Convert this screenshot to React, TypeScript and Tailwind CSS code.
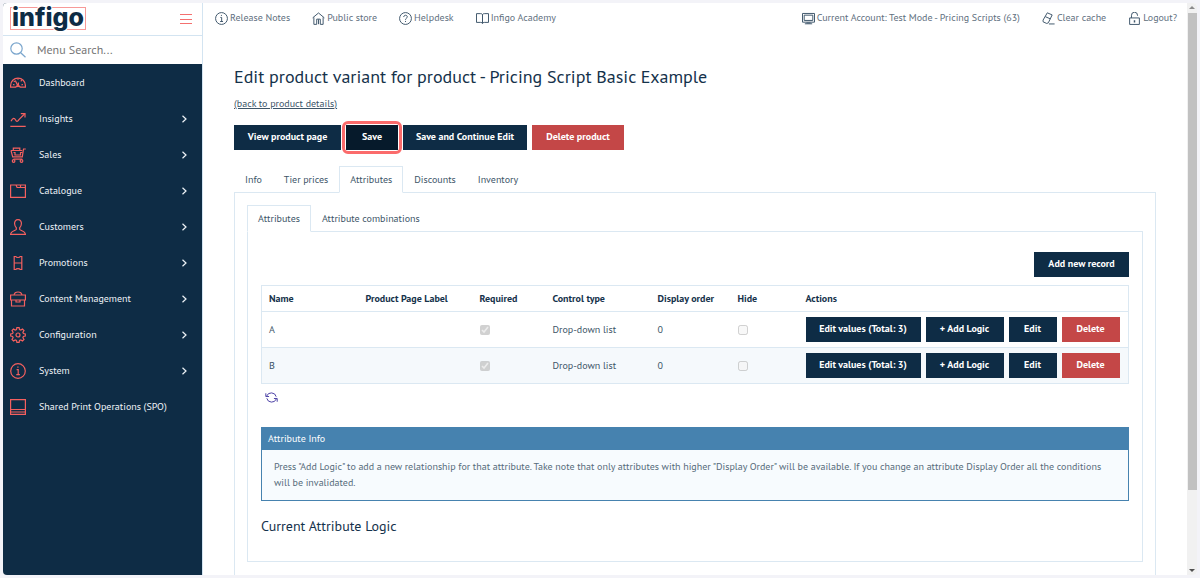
import type { ReactNode } from 'react';
import clsx from 'clsx';

// --- ICONS ---

type IconProps = { children: ReactNode; className?: string };

function Icon({ children, className = 'size-4' }: IconProps) {
  return (
    <svg
      viewBox="0 0 16 16"
      fill="none"
      stroke="currentColor"
      strokeWidth="1.2"
      className={clsx('shrink-0', className)}
      aria-hidden="true"
    >
      {children}
    </svg>
  );
}

const icons = {
  dashboard: (
    <>
      <path d="M.6 12.2V10.500a7.400 7.400 0 0 1 14.800 0v1.700H10.300a2.500 2.500 0 0 0-4.600 0z" />
      <path d="M7.600 10.300 5.300 5.400M8.400 10.300V7.500M3 9.500l1.500.4M13 9.500l-1.500.4M8 3.200v1.600M11.800 5l-1 1.300M3.800 6l1 .8" />
      <path d="M6.600 12.200a1.500 1.500 0 0 1 2.900 0" />
    </>
  ),
  insights: (
    <>
      <path d="M.3 15.300h15.400" />
      <path d="M1 10.300c1.800-4 3.500-3.500 4.600-1.200s2.600 1 3.600-.8L14.500 3" />
      <path d="M10.800 2.600h4.200v4" />
    </>
  ),
  sales: (
    <>
      <path d="M.8 3.500h11.400M1 3.500l1.700 6.300h9.600L13.500 2h2.300M3.400 12.200h8.900M3.300 3.500V1.200h6.500v2.300" />
      <path d="M3.500 5.500h1.500v2.500h5.500V5.500h2" />
      <circle cx="3.600" cy="14" r="1.300" />
      <circle cx="11.500" cy="14" r="1.300" />
    </>
  ),
  catalogue: <path d="M.6 14.300V2h5.400l1.100 2.500h8.300v9.800zM6 2h9.400v2.500M10.500 2v2.500" />,
  customers: (
    <path d="M8 .6c2.300 0 3.600 1.700 3.400 4.200-.1 1.600-.7 3.100-1.700 4v1.600c.4 1.100 5.700 1.500 5.700 5H.6c0-3.500 5.300-3.900 5.700-5V8.800c-1-.9-1.600-2.400-1.700-4C4.400 2.300 5.700.6 8 .6z" />
  ),
  promotions: <path d="M4.200 1.500h1.600c.4 1.300 4 1.300 4.400 0h1.600v13h-1.600c-.4-1.300-4-1.300-4.400 0H4.200zM4.200 8h7.600" />,
  content: (
    <path d="M.6 4h14.800v5H.6zM1.500 9v6h13V9M6 9v2h4V9M4 4c.3-1.700 1.800-3 4-3s3.700 1.300 4 3" />
  ),
  configuration: (
    <>
      <path d="M6.900.7h2.200l.4 1.900 1.300.5 1.700-1.100 1.500 1.500-1.100 1.700.5 1.300 1.900.4v2.200l-1.900.4-.5 1.300 1.100 1.700-1.500 1.500-1.700-1.100-1.300.5-.4 1.900H6.900l-.4-1.900-1.300-.5L3.500 14 2 12.500l1.100-1.700-.5-1.300L.7 9.100V6.900l1.900-.4.5-1.300L2 3.500 3.500 2l1.700 1.100 1.300-.5z" />
      <circle cx="8" cy="8" r="2" />
    </>
  ),
  system: (
    <>
      <circle cx="8" cy="8" r="7.300" />
      <path d="M6.600 6.700H8.200v5M6.300 11.700h3.600M7.300 4.200h1.200" />
    </>
  ),
  spo: <path d="M.6.6h14.800v14.800H.6zM.6 10.500h14.800M.6 13h14.800" />,
  home: <path d="m.8 7.200 7.200-6 7.200 6M2.300 6.500v8.700h3.500V8.800h4.400v6.400h3.500V6.500M8 9v6" />,
  help: (
    <>
      <circle cx="8" cy="8" r="7.300" />
      <path d="M5.800 6.200c0-3 4.400-2.900 4.400-.2 0 1.700-2.200 1.600-2.200 3.600M8 11v1.300" />
    </>
  ),
  book: (
    <path d="M.6 2h5.200c1.300 0 2.200.6 2.200 1.600V14c-.3-.8-1-1.200-2.200-1.200H.6zM15.400 2h-5.200C8.900 2 8 2.600 8 3.600V14c.3-.8 1-1.200 2.200-1.200h5.200z" />
  ),
  monitor: <path d="M.6 1.800h14.800v10.700H.6zM2.700 3.900h10.600v6.500H2.700zM3.500 14.500h9M5.500 13.500h5" />,
  eraser: <path d="m6.500 1 6 2.600-4.700 9.700-2 .8-4.400-2L1.300 10zM4 5.700l6.200 2.700M8.500 14.700h7" />,
  lock: (
    <>
      <path d="M2 7.300h12v8H2zM4.300 7.300V4a3.700 3.700 0 0 1 7.400 0v.8" />
      <path d="M8 10v3" strokeWidth="1.800" />
    </>
  ),
  refresh: <path d="M1 2.800v4h4M15 13.200v-4h-4M2 6.300a6.200 6.200 0 0 1 11.800.7M14 9.700A6.200 6.200 0 0 1 2.200 9" />,
};

// --- DATA ---

const menu = [
  { label: 'Dashboard', icon: icons.dashboard, expandable: false },
  { label: 'Insights', icon: icons.insights, expandable: true },
  { label: 'Sales', icon: icons.sales, expandable: true },
  { label: 'Catalogue', icon: icons.catalogue, expandable: true },
  { label: 'Customers', icon: icons.customers, expandable: true },
  { label: 'Promotions', icon: icons.promotions, expandable: true },
  { label: 'Content Management', icon: icons.content, expandable: true },
  { label: 'Configuration', icon: icons.configuration, expandable: true },
  { label: 'System', icon: icons.system, expandable: true },
  { label: 'Shared Print Operations (SPO)', icon: icons.spo, expandable: false },
];

const leftLinks = [
  { label: 'Release Notes', icon: icons.system },
  { label: 'Public store', icon: icons.home },
  { label: 'Helpdesk', icon: icons.help },
  { label: 'Infigo Academy', icon: icons.book },
];

const rightLinks = [
  { label: 'Current Account: Test Mode - Pricing Scripts (63)', icon: icons.monitor },
  { label: 'Clear cache', icon: icons.eraser },
  { label: 'Logout?', icon: icons.lock },
];

const attributes = [
  { name: 'A', control: 'Drop-down list', order: 0 },
  { name: 'B', control: 'Drop-down list', order: 0 },
];

// --- COMPONENTS ---

function Button({ children, className }: { children: ReactNode; className?: string }) {
  return (
    <button
      type="button"
      className={clsx('h-[25px] shrink-0 pb-px text-[10px] font-bold whitespace-nowrap text-white', className)}
    >
      {children}
    </button>
  );
}

function Tabs({ items, active }: { items: string[]; active: string }) {
  return (
    <div role="tablist" className="-mb-px flex">
      {items.map((item) => (
        <button
          key={item}
          type="button"
          role="tab"
          aria-selected={item === active}
          className={clsx(
            'h-[27px] border px-[10px] text-[#3d5568]',
            item === active ? 'border-[#dbe8f2] border-b-white bg-white' : 'border-transparent',
          )}
        >
          {item}
        </button>
      ))}
    </div>
  );
}

function TopLinks({ links }: { links: { label: string; icon: ReactNode }[] }) {
  return (
    <div className="flex gap-[22px]">
      {links.map((link) => (
        <a key={link.label} href="#" className="flex items-center gap-[2px] whitespace-nowrap">
          <Icon className="size-[13px] text-[#3f566b]">{link.icon}</Icon>
          {link.label}
        </a>
      ))}
    </div>
  );
}

function Logo() {
  return (
    <svg viewBox="0 0 78 32" className="h-8 w-[78px]" role="img" aria-label="infigo">
      <rect x="1.500" y="4.500" width="75" height="22" fill="none" stroke="#f79a98" />
      <text
        x="3"
        y="23"
        fontSize="25"
        fontWeight="800"
        fill="#0e2c45"
        stroke="#fff"
        strokeWidth="2"
        paintOrder="stroke"
        className="font-['Inter',sans-serif]"
      >
        infigo
      </text>
    </svg>
  );
}

function Sidebar() {
  return (
    <aside className="flex w-[200px] shrink-0 flex-col border-r border-[#d3e4f1] bg-[#0e2c45]">
      <div className="flex h-[33px] shrink-0 items-center justify-between border-b border-[#d3e4f1] bg-white pr-[10px] pl-[6px]">
        <Logo />
        <button type="button" aria-label="Toggle menu" className="text-[#f4706f]">
          <svg viewBox="0 0 12 12" className="size-3" stroke="currentColor">
            <path d="M0 1.500h12M0 6.500h12M0 10.500h12" />
          </svg>
        </button>
      </div>
      <label className="flex h-7 shrink-0 items-center gap-[11px] bg-white pl-[7px]">
        <Icon className="size-4 text-[#7ba6cd]">
          <circle cx="6.500" cy="6.500" r="5.700" />
          <path d="m10.700 10.700 4.800 4.500" />
        </Icon>
        <input
          type="text"
          placeholder="Menu Search..."
          aria-label="Menu search"
          className="w-full min-w-0 text-xs text-[#5f6f7d] outline-none placeholder:text-[#757575]"
        />
      </label>
      <nav className="pt-px">
        {menu.map((item) => (
          <a key={item.label} href="#" className="flex h-9 items-center pr-[14px] pl-[7px] text-[#eef3f7]">
            <Icon className="size-4 text-[#f4605f]">{item.icon}</Icon>
            <span className="ml-[13px] flex-1">{item.label}</span>
            {item.expandable && (
              <svg viewBox="0 0 8 8" className="size-2" fill="none" stroke="currentColor" strokeWidth="1.200">
                <path d="m2.500.8 3.500 3.200-3.500 3.200" />
              </svg>
            )}
          </a>
        ))}
      </nav>
    </aside>
  );
}

function AttributeTable() {
  return (
    <table className="mt-2 w-full table-fixed border-collapse border border-[#dbe8f2] text-left text-[#3d5568]">
      <colgroup>
        <col className="w-[97px]" />
        <col className="w-[114px]" />
        <col className="w-[73px]" />
        <col className="w-[105px]" />
        <col className="w-[80px]" />
        <col className="w-[68px]" />
        <col />
      </colgroup>
      <thead>
        <tr className="h-[26px] text-[#15324b]">
          {['Name', 'Product Page Label', 'Required', 'Control type', 'Display order', 'Hide', 'Actions'].map((head) => (
            <th key={head} className="px-[7px] font-bold whitespace-nowrap">{head}</th>
          ))}
        </tr>
      </thead>
      <tbody>
        {attributes.map((row) => (
          <tr key={row.name} className="h-9 border-t border-[#dbe8f2] even:bg-[#f5f9fc]">
            <td className="px-[7px]">{row.name}</td>
            <td />
            <td className="px-[7px]">
              <input type="checkbox" checked disabled readOnly aria-label={`${row.name} required`} className="block size-[10px]" />
            </td>
            <td className="px-[7px]">{row.control}</td>
            <td className="px-[7px]">{row.order}</td>
            <td className="px-[7px]">
              <input type="checkbox" disabled aria-label={`${row.name} hidden`} className="block size-[10px]" />
            </td>
            <td className="px-[7px]">
              <div className="flex gap-[5px]">
                <Button className="w-[115px] bg-[#0e2c45]">Edit values (Total: 3)</Button>
                <Button className="w-[78px] bg-[#0e2c45]">+ Add Logic</Button>
                <Button className="w-12 bg-[#0e2c45]">Edit</Button>
                <Button className="w-[58px] bg-[#c44747]">Delete</Button>
              </div>
            </td>
          </tr>
        ))}
      </tbody>
    </table>
  );
}

// Scroll rail on the right edge of the window
function ScrollRail() {
  return (
    <div className="flex w-[10px] shrink-0 flex-col items-center bg-[#f1f1f1]" aria-hidden="true">
      <svg viewBox="0 0 10 10" className="size-[10px] shrink-0 fill-[#8b8b8b]">
        <path d="M5 3 8 6H2z" />
      </svg>
      <div className="ml-px h-5/6 w-[9px] bg-[#c1c1c1]" />
      <svg viewBox="0 0 10 10" className="mt-auto size-[10px] shrink-0 fill-[#505050]">
        <path d="M5 7 2 4h6z" />
      </svg>
    </div>
  );
}

function App() {
  return (
    <div className="h-screen bg-[#f3f3f8] p-[3px] font-['PT_Sans','Lato',sans-serif] text-[10px] leading-4">
      <div className="flex h-full overflow-hidden rounded-sm bg-white">
        <Sidebar />

        <main className="min-w-0 flex-1 overflow-hidden">
          <header className="flex h-[30px] items-center justify-between pr-[10px] pl-3 text-[#5f7080]">
            <TopLinks links={leftLinks} />
            <TopLinks links={rightLinks} />
          </header>

          <div className="mt-8 px-[31px]">
            <h1 className="text-lg leading-6 text-[#15324b]">
              Edit product variant for product - Pricing Script Basic Example
            </h1>
            <a href="#" className="mt-[7px] block w-fit text-[#3d5568] underline">(back to product details)</a>

            <div className="mt-[13px] flex gap-[5px]">
              <Button className="w-[107px] bg-[#0e2c45]">View product page</Button>
              <div className="relative flex">
                <Button className="w-[52px] bg-[#061a2b]">Save</Button>
                <span className="absolute -inset-1 rounded-md border-3 border-[#fb6b6b]" />
              </div>
              <Button className="w-[124px] bg-[#0e2c45]">Save and Continue Edit</Button>
              <Button className="w-[92px] bg-[#c44747]">Delete product</Button>
            </div>

            <div className="mt-4">
              <Tabs items={['Info', 'Tier prices', 'Attributes', 'Discounts', 'Inventory']} active="Attributes" />
              <section className="border border-[#dbe8f2] p-3 pb-16">
                <Tabs items={['Attributes', 'Attribute combinations']} active="Attributes" />
                <div className="border border-[#dbe8f2] px-[13px] pt-5 pb-[25px]">
                  <div className="flex justify-end">
                    <Button className="w-[95px] bg-[#0e2c45]">Add new record</Button>
                  </div>

                  <AttributeTable />

                  <button type="button" aria-label="Refresh" className="mt-[7px] ml-1 block text-[#4a3fa5]">
                    <Icon className="size-[13px]">{icons.refresh}</Icon>
                  </button>

                  <div className="mt-[23px] border border-[#4682af] bg-[#f7fbfe]">
                    <h2 className="bg-[#4682af] px-[6px] py-[3px] text-white">Attribute Info</h2>
                    <p className="px-3 pt-[9px] pb-[9px] text-[#566b7b]">
                      Press "Add Logic" to add a new relationship for that attribute. Take note that only attributes with
                      higher "Display Order" will be available. If you change an attribute Display Order all the
                      conditions will be invalidated.
                    </p>
                  </div>

                  <h2 className="mt-[15px] text-sm leading-5 text-[#15324b]">Current Attribute Logic</h2>
                </div>
              </section>
            </div>
          </div>
        </main>

        <ScrollRail />
      </div>
    </div>
  );
}

export default App;
